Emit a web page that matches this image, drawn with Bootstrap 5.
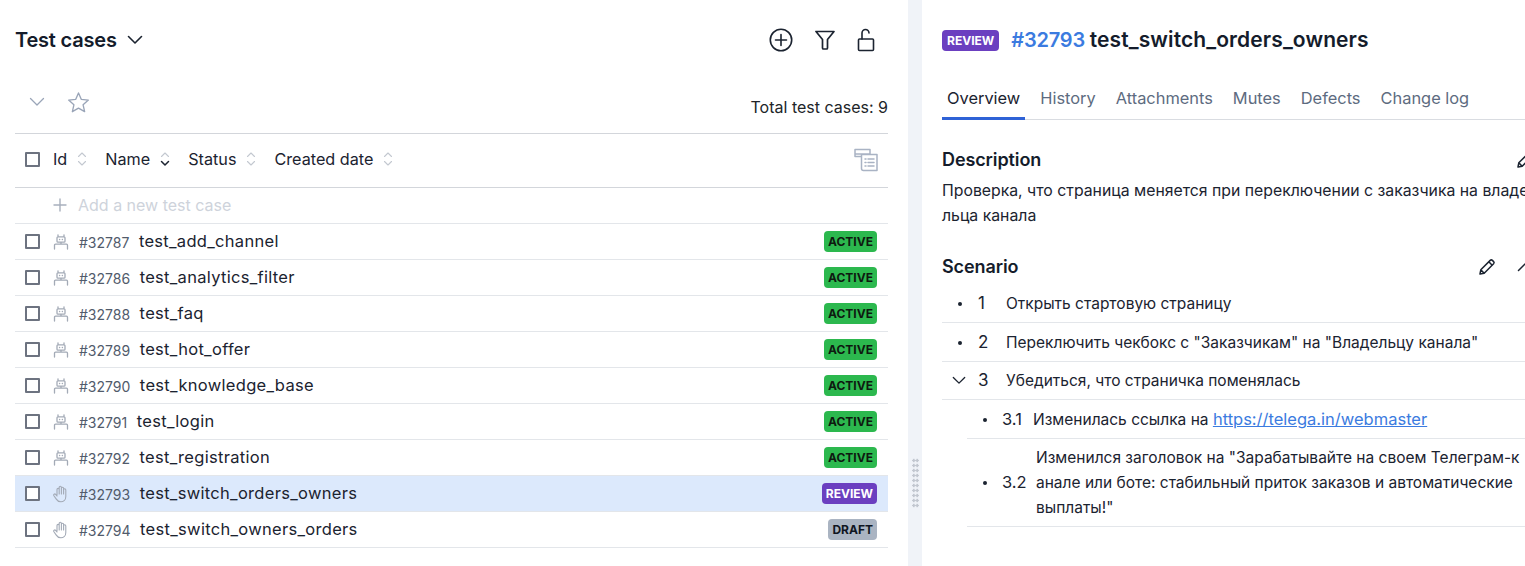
<!DOCTYPE html>
<html lang="ru">
<head>
  <meta charset="UTF-8">
  <meta name="viewport" content="width=device-width, initial-scale=1.0">
  <title>Test cases</title>
  <link href="https://cdn.jsdelivr.net/npm/bootstrap@5.3.0/dist/css/bootstrap.min.css" rel="stylesheet">
  <style>
    html, body { height: 100%; overflow: hidden; }
    body { font-family: Inter, "Liberation Sans", sans-serif; font-size: 16px; color: #1b2330; background: #fff; }
    svg { display: block; flex: none; fill: none; stroke: currentColor; stroke-linecap: round; stroke-linejoin: round; }
    .app-shell { width: 1525px; height: 566px; }
    .left-pane { width: 908px; flex: none; padding: 0 20px 0 15px; }
    .splitter { width: 14px; flex: none; background: #f0f3f8; padding: 458px 0 0 4px; }
    .grip { width: 7px; height: 50px; background-image: radial-gradient(#c2c7d0 1.3px, transparent 1.5px); background-size: 3.5px 5px; }
    .right-pane { width: 603px; flex: none; padding: 0 0 0 20px; overflow: hidden; }
    .top-bar { height: 80px; }
    .title-wrap { gap: 10px; }
    .pane-title { font-size: 20px; font-weight: 600; letter-spacing: -.2px; margin: 0; color: #141c2b; }
    .head-actions { gap: 22px; margin-right: 13px; }
    .tool-row { height: 53px; padding: 0 0 9px 14px; color: #9aa5b8; }
    .tool-left { gap: 22px; }
    .total-label { font-size: 16px; margin-top: 9px; }
    .head-row { height: 55px; border-top: 1px solid #d3d6db; border-bottom: 1px solid #d3d6db; padding: 0 0 2px 10px; font-size: 16.2px; }
    .box { width: 15px; height: 15px; border: 2px solid #6d7380; border-radius: 1px; flex: none; background: #fff; }
    .head-box { margin-right: 13px; }
    .sort-col { display: flex; align-items: center; gap: 10px; margin-right: 18px; }
    .cols-icon { color: #a9b3c4; margin-right: 10px; }
    .add-row { height: 36px; border-bottom: 1px solid #e3e6ea; padding: 0 0 2px 38px; color: #ced3db; }
    .add-plus { color: #a8b0bd; margin-right: 11px; }
    .case-row { height: 36px; border-bottom: 1px solid #e3e6ea; padding: 0 11px 0 10px; }
    .case-row.is-selected { background: #dce9fc; }
    .case-icon { color: #a3aab6; margin: 0 10px 0 13px; }
    .case-id { font-size: 14px; color: #515b6b; margin-right: 9.5px; padding-top: 2px; }
    .case-name { font-size: 16.5px; letter-spacing: .3px; }
    .status-tag { font-size: 12px; font-weight: 700; line-height: 21px; height: 21px; padding: 0 4px; border-radius: 4px; }
    .tag-active { background: #2cb84e; color: #0e1a10; }
    .tag-review { background: #6b3fc0; color: #fff; }
    .tag-draft { background: #aab4c2; color: #101622; }
    .title-tag { padding: 0 5px; margin-right: 12px; }
    .title-id { color: #3b7be0; }
    .title-name { font-size: 21px; letter-spacing: .1px; }
    .detail-tabs { height: 40px; border-bottom: 1px solid #d9dce1; }
    .detail-tab { padding: 0 5px; margin-right: 10px; height: 40px; line-height: 36px; color: #5d6b80; font-size: 16.4px; white-space: nowrap; }
    .detail-tab.is-active { color: #1b2330; border-bottom: 3px solid #2f62d6; }
    .section-title { font-size: 18px; font-weight: 600; margin: 0; letter-spacing: -.1px; color: #141c2b; }
    .desc-head { height: 38px; margin-top: 21px; width: 603px; }
    .desc-pencil { margin-right: 11px; }
    .desc-text { font-size: 15.8px; line-height: 25px; margin-top: -1px; white-space: nowrap; }
    .scen-head { height: 34px; margin-top: 22px; width: 603px; }
    .scen-pencil { margin-right: 21px; }
    .scen-collapse { margin-right: 12px; }
    .step { border-bottom: 1px solid #e3e6ea; font-size: 15.5px; height: 39px; padding-top: 1px; }
    .step-short { height: 38px; padding-top: 0; }
    .step-tall { height: 88px; padding-top: 0; }
    .step-mark { width: 36px; flex: none; }
    .step-mark-open { padding-left: 10px; }
    .step-num { font-size: 17px; width: 28px; flex: none; }
    .dot { width: 4px; height: 4px; border-radius: 50%; background: #1b2330; margin: 0 auto; }
    .sub-step { margin-left: 25px; }
    .sub-mark { width: 35px; flex: none; padding-left: 16px; }
    .sub-mark .dot { margin: 0; }
    .sub-num { font-size: 16.5px; width: 31px; flex: none; }
    .sub-text { margin-left: 3px; line-height: 25px; white-space: nowrap; }
    .step-link { color: #3b7be0; font-size: 16.5px; }
  </style>
</head>
<body>
<svg width="0" height="0" class="position-absolute">
  <symbol id="bot" viewBox="0 0 16 16"><path d="M5 .8v2M11 .8v2M5 2.800h6a1 1 0 0 1 1 1v3.400a1 1 0 0 1-1 1H5a1 1 0 0 1-1-1V3.800a1 1 0 0 1 1-1zM6.500 5.500h.2M9.300 5.500h.2M8 8.200v2M1.500 15v-3.800a1 1 0 0 1 1-1h11a1 1 0 0 1 1 1V15"/></symbol>
  <symbol id="hand" viewBox="0 0 16 18"><path d="M4 10V4.500a1.100 1.100 0 0 1 2.200 0V2.400a1.100 1.100 0 0 1 2.200 0v.9a1.100 1.100 0 0 1 2.200 0v1.600a1.100 1.100 0 0 1 2.200 0v6.600c0 3.100-2.200 5.300-5 5.300-2.200 0-3.500-1-4.500-2.700L.9 10.700c-.7-1.100.8-2.300 1.700-1.400L4 11M6.200 4.500V9M8.400 3.300V9M10.600 4.900V9"/></symbol>
  <symbol id="sort" viewBox="0 0 10 16"><path d="M1.500 5.500 5 2l3.500 3.500M1.500 10.500 5 14l3.500-3.500"/></symbol>
  <symbol id="chev" viewBox="0 0 16 10"><path d="M1.500 1.500 8 8l6.500-6.500"/></symbol>
  <symbol id="pencil" viewBox="0 0 18 18"><path d="M2 16l.8-4.200L12.200 2.400a1.600 1.600 0 0 1 2.200 0l1.200 1.200a1.600 1.600 0 0 1 0 2.200L6.200 15.200zM10.800 3.800l3.400 3.400M2.800 11.800l3.400 3.400"/></symbol>
</svg>

<div class="app-shell d-flex">
  <!-- Left list -->
  <div class="left-pane">
    <div class="top-bar d-flex align-items-center justify-content-between">
      <div class="title-wrap d-flex align-items-center">
        <h1 class="pane-title">Test cases</h1>
        <svg width="16" height="10" stroke-width="1.600"><use href="#chev"/></svg>
      </div>
      <div class="head-actions d-flex align-items-center">
        <svg width="24" height="24" viewBox="0 0 24 24" stroke-width="1.600"><circle cx="12" cy="12" r="10.700"/><path d="M12 6.500v11M6.500 12h11"/></svg>
        <svg width="20" height="20" viewBox="0 0 20 20" stroke-width="1.700"><path d="M1 1.500h18l-6.500 8v8.500a1 1 0 0 1-1 1h-3a1 1 0 0 1-1-1V9.500z"/></svg>
        <svg width="18" height="24" viewBox="0 0 18 24" stroke-width="1.600"><rect x="1.500" y="11" width="15" height="11.500" rx="1"/><path d="M5 11V5a3.500 3.500 0 0 1 7 0"/></svg>
      </div>
    </div>
    <div class="tool-row d-flex align-items-center justify-content-between">
      <div class="tool-left d-flex align-items-center">
        <svg width="16" height="10" stroke-width="1.300"><use href="#chev"/></svg>
        <svg width="23" height="23" viewBox="0 0 24 24" stroke-width="1.400"><path d="M12 2l3 6.800 7.300.7-5.500 4.900 1.600 7.200L12 17.800l-6.400 3.800 1.600-7.200L1.700 9.500 9 8.800z"/></svg>
      </div>
      <span class="total-label text-dark">Total test cases: 9</span>
    </div>
    <div class="head-row d-flex align-items-center">
      <span class="box head-box"></span>
      <div class="sort-col"><span>Id</span><svg width="10" height="16" color="#c3c8d0" stroke-width="1.100"><use href="#sort"/></svg></div>
      <div class="sort-col"><span>Name</span><svg width="10" height="16" viewBox="0 0 10 16" stroke-width="1.100"><path stroke="#c3c8d0" d="M1.500 5.500 5 2l3.500 3.500"/><path stroke="#1b2330" stroke-width="1.500" d="M1.500 10.500 5 14l3.500-3.500"/></svg></div>
      <div class="sort-col"><span>Status</span><svg width="10" height="16" color="#c3c8d0" stroke-width="1.100"><use href="#sort"/></svg></div>
      <div class="sort-col"><span>Created date</span><svg width="10" height="16" color="#c3c8d0" stroke-width="1.100"><use href="#sort"/></svg></div>
      <svg width="24" height="24" viewBox="0 0 24 24" stroke-width="1.500" class="cols-icon ms-auto"><path d="M1 1.500h15v4.500H1zM1 6v2.500h6M7.500 6.500h15.500v16H9.500a2 2 0 0 1-2-2zM11 11h1M14 11h6M11 14.500h1M14 14.500h6M11 18h1M14 18h6"/></svg>
    </div>
    <div class="add-row d-flex align-items-center">
      <svg width="14" height="14" viewBox="0 0 14 14" stroke-width="1.400" class="add-plus"><path d="M7 1v12M1 7h12"/></svg>
      <span>Add a new test case</span>
    </div>
    <div id="caseList"></div>
  </div>

  <div class="splitter"><div class="grip"></div></div>

  <!-- Right detail -->
  <div class="right-pane">
    <div class="top-bar d-flex align-items-center">
      <span class="status-tag tag-review title-tag">REVIEW</span>
      <h2 class="pane-title"><span class="title-id">#32793</span> <span class="title-name">test_switch_orders_owners</span></h2>
    </div>
    <div class="detail-tabs d-flex">
      <div class="detail-tab is-active">Overview</div>
      <div class="detail-tab">History</div>
      <div class="detail-tab">Attachments</div>
      <div class="detail-tab">Mutes</div>
      <div class="detail-tab">Defects</div>
      <div class="detail-tab">Change log</div>
    </div>
    <div class="desc-head d-flex align-items-center justify-content-between">
      <h3 class="section-title">Description</h3>
      <svg width="18" height="18" stroke-width="1.500" class="desc-pencil"><use href="#pencil"/></svg>
    </div>
    <div class="desc-text">Проверка, что страница меняется при переключении с заказчика на владе<br>льца канала</div>
    <div class="scen-head d-flex align-items-center">
      <h3 class="section-title me-auto">Scenario</h3>
      <svg width="18" height="18" stroke-width="1.500" class="scen-pencil"><use href="#pencil"/></svg>
      <svg width="16" height="10" viewBox="0 0 16 10" stroke-width="1.500" class="scen-collapse"><path d="M1.500 8.500 8 2l6.500 6.500"/></svg>
    </div>
    <div class="step d-flex align-items-center">
      <div class="step-mark"><div class="dot"></div></div><span class="step-num">1</span><span>Открыть стартовую страницу</span>
    </div>
    <div class="step d-flex align-items-center">
      <div class="step-mark"><div class="dot"></div></div><span class="step-num">2</span><span>Переключить чекбокс с "Заказчикам" на "Владельцу канала"</span>
    </div>
    <div class="step step-short d-flex align-items-center">
      <div class="step-mark step-mark-open"><svg width="14" height="9" stroke-width="1.500"><use href="#chev"/></svg></div><span class="step-num">3</span><span>Убедиться, что страничка поменялась</span>
    </div>
    <div class="step sub-step d-flex align-items-center">
      <div class="sub-mark"><div class="dot"></div></div><span class="sub-num">3.1</span><span>Изменилась ссылка на <a class="step-link" href="#">https://telega.in/webmaster</a></span>
    </div>
    <div class="step step-tall sub-step d-flex align-items-center">
      <div class="sub-mark"><div class="dot"></div></div><span class="sub-num">3.2</span>
      <span class="sub-text">Изменился заголовок на "Зарабатывайте на своем Телеграм-к<br>анале или боте: стабильный приток заказов и автоматические<br>выплаты!"</span>
    </div>
  </div>
</div>

<script>
  // rows of the list
  var cases = [
    ['32787', 'test_add_channel', 'ACTIVE'],
    ['32786', 'test_analytics_filter', 'ACTIVE'],
    ['32788', 'test_faq', 'ACTIVE'],
    ['32789', 'test_hot_offer', 'ACTIVE'],
    ['32790', 'test_knowledge_base', 'ACTIVE'],
    ['32791', 'test_login', 'ACTIVE'],
    ['32792', 'test_registration', 'ACTIVE'],
    ['32793', 'test_switch_orders_owners', 'REVIEW'],
    ['32794', 'test_switch_owners_orders', 'DRAFT']
  ];
  var html = '';
  cases.forEach(function (c) {
    var active = c[2] === 'ACTIVE';
    var icon = active ? '<svg class="case-icon" width="16" height="16" stroke-width="1.300"><use href="#bot"/></svg>'
      : '<svg class="case-icon" width="16" height="18" stroke-width="1.100"><use href="#hand"/></svg>';
    html += '<div class="case-row d-flex align-items-center' + (c[2] === 'REVIEW' ? ' is-selected' : '') + '">' +
      '<span class="box"></span>' + icon +
      '<span class="case-id">#' + c[0] + '</span><span class="case-name">' + c[1] + '</span>' +
      '<span class="status-tag ms-auto tag-' + c[2].toLowerCase() + '">' + c[2] + '</span></div>';
  });
  document.getElementById('caseList').innerHTML = html;
</script>
<script src="https://cdn.jsdelivr.net/npm/bootstrap@5.3.0/dist/js/bootstrap.bundle.min.js"></script>
</body>
</html>
